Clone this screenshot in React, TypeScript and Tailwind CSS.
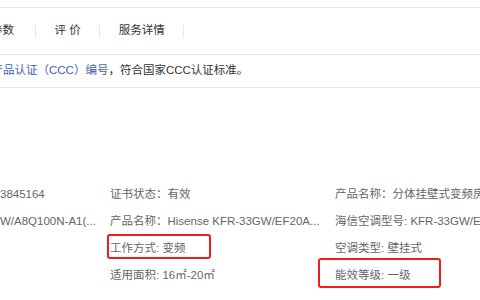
const tabs = ["参数", "评 价", "服务详情"];

const rows = [
  { a: "3845164", b: "证书状态：有效", c: "产品名称：分体挂壁式变频房间空调器" },
  { a: "W/A8Q100N-A1(...", b: "产品名称：Hisense KFR-33GW/EF20A...", c: "海信空调型号: KFR-33GW/EF20A3" },
  { a: "", b: "工作方式: 变频", c: "空调类型: 壁挂式", markB: true },
  { a: "", b: "适用面积: 16㎡-20㎡", c: "能效等级: 一级", markC: true },
];

const App = () => {
  return (
    <div
      className="w-[480px] h-[300px] overflow-hidden bg-white text-[11.5px] text-[#666]"
      style={{ fontFamily: '"Liberation Sans", "Noto Sans CJK SC", sans-serif' }}
    >
      <div className="h-[7px]" />
      <div className="border-t border-b border-[#e8e8e8] h-[48px] flex items-center ml-[-9px] text-[#333]">
        {tabs.map((t, i) => (
          <div key={i} className="flex items-center">
            <span className={i === 0 ? "pr-[21px] whitespace-pre" : "px-[18.5px] whitespace-pre"}>{t}</span>
            <span className="w-px h-[14px] bg-[#e8e8e8]" />
          </div>
        ))}
      </div>

      <div className="h-[33px] border-b border-[#e8e8e8] flex items-center ml-[-8.5px] whitespace-nowrap text-[#333]">
        <span className="text-[#3d64b0]">产品认证（CCC）编号</span>
        <span>，符合国家CCC认证标准。</span>
      </div>

      <div className="h-[93px]" />

      <div className="flex flex-col whitespace-nowrap">
        {rows.map((r, i) => (
          <div key={i} className="h-[27px] flex items-center">
            <div className="w-[110px] shrink-0 overflow-hidden">{r.a}</div>
            <div className="w-[225px] shrink-0 relative">
              {r.markB && (
                <div className="absolute left-[-3px] top-[-6px] w-[104px] h-[25px] border-2 border-[#f01c1c] rounded-[3px]" />
              )}
              {r.b}
            </div>
            <div className="relative shrink-0">
              {r.markC && (
                <div className="absolute left-[-17px] top-[-9px] w-[123px] h-[30px] border-2 border-[#f01c1c] rounded-[3px]" />
              )}
              {r.c}
            </div>
          </div>
        ))}
      </div>
    </div>
  );
};

export default App;
